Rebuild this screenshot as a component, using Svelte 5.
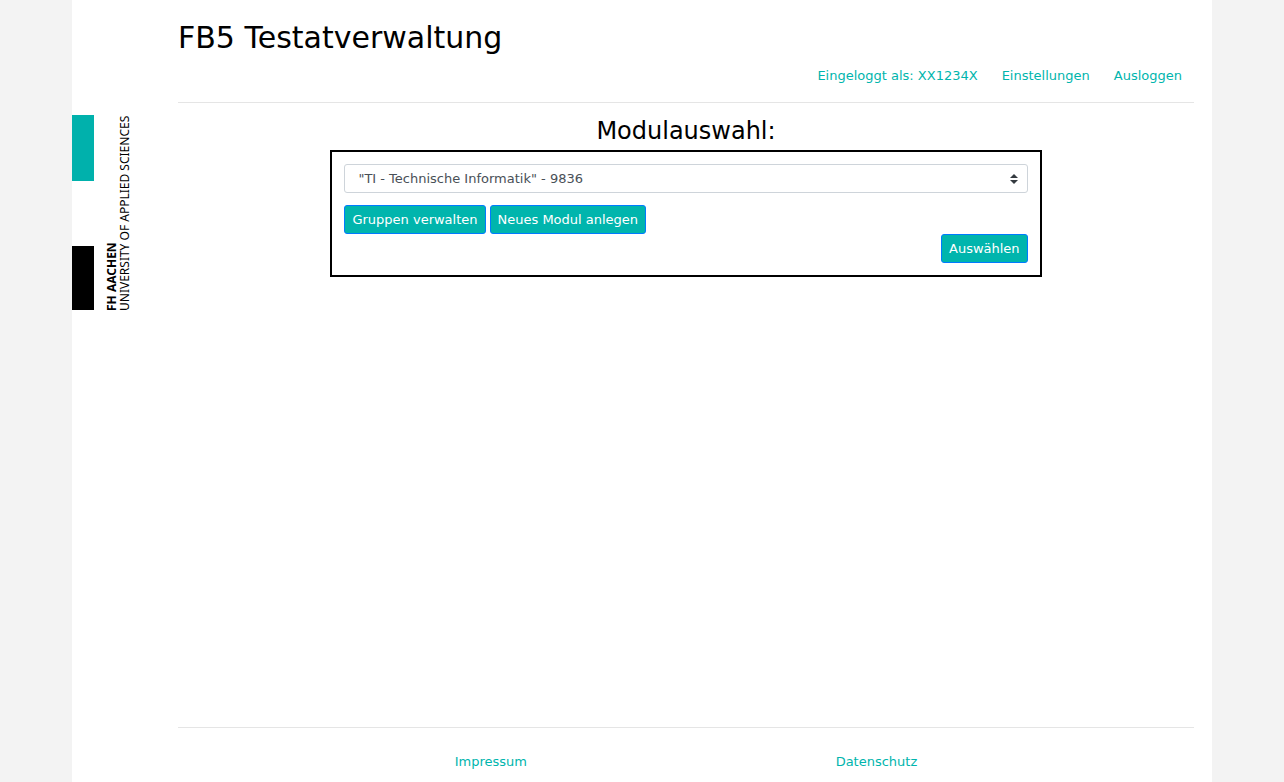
<script>
  const modules = ['"TI - Technische Informatik" - 9836'];
  let selected = $state(modules[0]);
</script>

<div class="page">
  <aside class="brand">
    <div class="bars">
      <div class="bar mint"></div>
      <div class="bar black"></div>
    </div>
    <div class="brand-text"><strong>FH AACHEN</strong><br />UNIVERSITY OF APPLIED SCIENCES</div>
  </aside>

  <div class="content">
    <header>
      <h1>FB5 Testatverwaltung</h1>
      <nav class="account">
        <a href="#profil">Eingeloggt als: XX1234X</a>
        <a href="#einstellungen">Einstellungen</a>
        <a href="#ausloggen">Ausloggen</a>
      </nav>
    </header>

    <main>
      <h2 id="module-heading">Modulauswahl:</h2>
      <form class="panel" onsubmit={(e) => e.preventDefault()}>
        <div class="select-wrap">
          <select bind:value={selected} aria-labelledby="module-heading">
            {#each modules as module}
              <option value={module}>{module}</option>
            {/each}
          </select>
          <svg class="arrows" viewBox="0 0 8 10" width="8" height="10" aria-hidden="true">
            <path d="M4 0L0 4h8zM4 10L0 6h8z" fill="#343a40" />
          </svg>
        </div>
        <div class="actions">
          <button type="button">Gruppen verwalten</button>
          <button type="button">Neues Modul anlegen</button>
        </div>
        <div class="actions end">
          <button type="submit">Auswählen</button>
        </div>
      </form>
    </main>

    <footer>
      <a href="#impressum">Impressum</a>
      <a href="#datenschutz">Datenschutz</a>
    </footer>
  </div>
</div>

<style>
  :global(body) {
    margin: 0;
    background: #f3f3f3;
    font-family: Verdana, "DejaVu Sans", sans-serif;
    font-size: 13px;
    line-height: 19px;
    color: #000;
  }

  .page {
    box-sizing: border-box;
    display: flex;
    max-width: 1140px;
    min-height: 100vh;
    margin: 0 auto;
    padding-right: 18px;
    background: #fff;
  }

  .brand {
    display: flex;
    flex: 0 0 106px;
    align-items: flex-start;
    gap: 11px;
    padding-top: 115px;
    box-sizing: border-box;
  }

  .bars {
    display: flex;
    flex-direction: column;
    gap: 65px;
    width: 22px;
  }

  .mint {
    height: 66px;
    background: #00b1ac;
  }

  .black {
    height: 64px;
    background: #000;
  }

  .brand-text {
    height: 196px;
    writing-mode: vertical-rl;
    transform: rotate(180deg);
    font-family: "Noto Sans", sans-serif;
    font-size: 12px;
    line-height: 13px;
    white-space: nowrap;
  }

  .content {
    display: flex;
    flex: 1;
    flex-direction: column;
    min-width: 0;
  }

  header {
    padding: 19px 0 17px;
    border-bottom: 1px solid #e5e5e5;
  }

  h1 {
    margin: 0 0 10px;
    font-size: 30px;
    line-height: 37px;
    font-weight: 400;
  }

  .account {
    display: flex;
    justify-content: flex-end;
    gap: 24px;
    padding-right: 12px;
  }

  a {
    color: #00b5ad;
    text-decoration: none;
  }

  main {
    flex: 1;
    padding-top: 13px;
  }

  h2 {
    margin: 0 0 4px;
    font-size: 24px;
    line-height: 30px;
    font-weight: 400;
    text-align: center;
  }

  .panel {
    box-sizing: border-box;
    width: 70%;
    margin: 0 auto;
    padding: 12px;
    border: 2px solid #000;
  }

  .select-wrap {
    display: grid;
    align-items: center;
    margin-bottom: 12px;
  }

  select,
  .arrows {
    grid-area: 1 / 1;
  }

  select {
    width: 100%;
    height: 29px;
    padding: 0 24px 0 13px;
    appearance: none;
    border: 1px solid #ced4da;
    border-radius: 3px;
    background: #fff;
    color: #495057;
    font: inherit;
  }

  .arrows {
    justify-self: end;
    margin-right: 10px;
    pointer-events: none;
  }

  .actions {
    display: flex;
    gap: 4px;
  }

  .end {
    justify-content: flex-end;
  }

  button {
    height: 29px;
    padding: 0 7px;
    border: 1px solid #007bff;
    border-radius: 3px;
    background: #00b5ad;
    color: #fff;
    font: inherit;
    cursor: pointer;
  }

  footer {
    display: flex;
    justify-content: space-evenly;
    padding: 24px 0 11px;
    border-top: 1px solid #e5e5e5;
  }

  footer a {
    padding: 0 32px;
  }
</style>
